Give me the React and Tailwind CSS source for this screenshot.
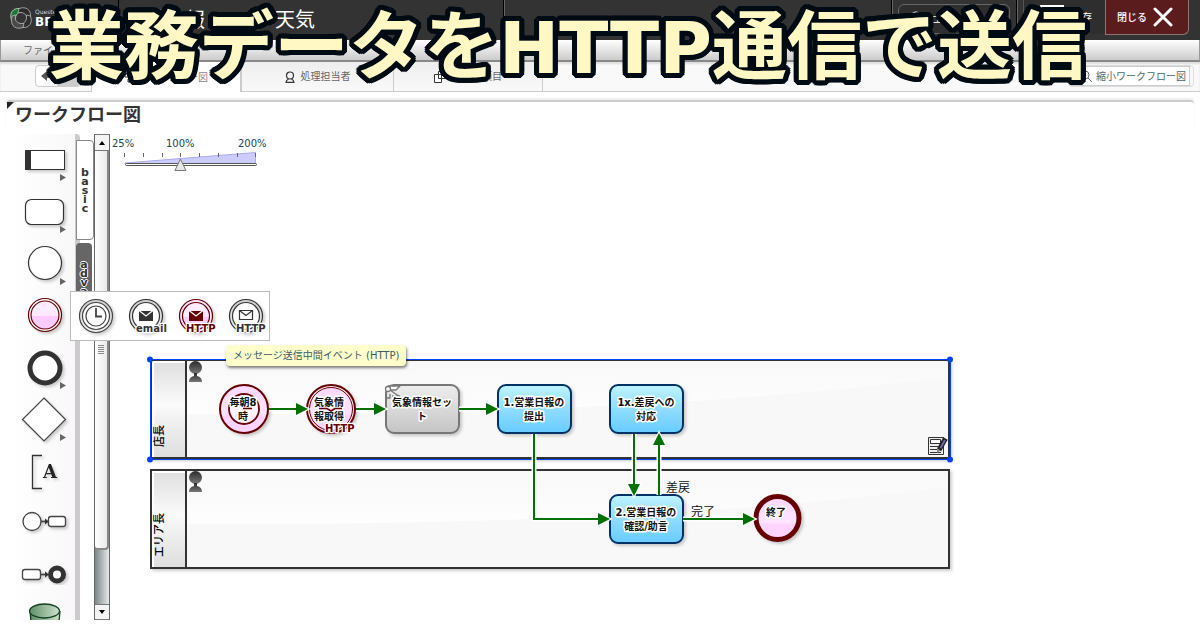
import { useState } from "react";

const RED = "#660000";
const GREEN = "#007000";

function Defs() {
  return (
    <svg width="0" height="0" className="absolute" aria-hidden="true">
      <defs>
        <linearGradient id="blue" x1="0" y1="0" x2="0" y2="1">
          <stop offset="0" stopColor="#c0f4ff" />
          <stop offset="0.5" stopColor="#90dcff" />
          <stop offset="1" stopColor="#66ccff" />
        </linearGradient>
        <linearGradient id="gray" x1="0" y1="0" x2="0" y2="1">
          <stop offset="0" stopColor="#eeeeee" />
          <stop offset="1" stopColor="#c4c4c4" />
        </linearGradient>
        <linearGradient id="pink" x1="0" y1="0" x2="0" y2="1">
          <stop offset="0" stopColor="#ffeeff" />
          <stop offset="0.52" stopColor="#ffe8ff" />
          <stop offset="0.53" stopColor="#ffccff" />
          <stop offset="1" stopColor="#ffccff" />
        </linearGradient>
        <linearGradient id="pinkSoft" x1="0" y1="0" x2="0" y2="1">
          <stop offset="0" stopColor="#ffd8ff" />
          <stop offset="0.6" stopColor="#ffe4ff" />
          <stop offset="0.66" stopColor="#ffd4fc" />
          <stop offset="1" stopColor="#ffd4ff" />
        </linearGradient>
        <linearGradient id="metal" x1="0" y1="0" x2="0" y2="1">
          <stop offset="0" stopColor="#cccccc" />
          <stop offset="1" stopColor="#f4f4f4" />
        </linearGradient>
        <linearGradient id="laneHead" x1="0" y1="0" x2="0" y2="1">
          <stop offset="0" stopColor="#e0e0e0" />
          <stop offset="0.45" stopColor="#fbfbfb" />
          <stop offset="0.55" stopColor="#f4f4f4" />
          <stop offset="1" stopColor="#dedede" />
        </linearGradient>
        <linearGradient id="laneShine" x1="0" y1="0" x2="0" y2="1">
          <stop offset="0" stopColor="#f8f8f8" />
          <stop offset="1" stopColor="#fefefe" />
        </linearGradient>
        <linearGradient id="person" x1="0" y1="0" x2="0" y2="1">
          <stop offset="0" stopColor="#2c2c2c" />
          <stop offset="1" stopColor="#777777" />
        </linearGradient>
        <linearGradient id="store" x1="0" y1="0" x2="1" y2="0">
          <stop offset="0" stopColor="#5f8f68" />
          <stop offset="1" stopColor="#cfe2cf" />
        </linearGradient>
        <filter id="shadow" x="-20%" y="-20%" width="150%" height="150%">
          <feDropShadow dx="2" dy="2" stdDeviation="1.5" floodColor="#000" floodOpacity="0.2" />
        </filter>
      </defs>
    </svg>
  );
}

function Logo() {
  return (
    <svg width="24" height="24" viewBox="0 0 24 24" aria-hidden="true">
      <g strokeWidth="0.8" strokeLinejoin="round" stroke="#b8b8b8">
        <path d="M2.500 14C0 7 4 2 10 2.500l4 .5 1 3.500C9 5.500 6 8 6.500 15z" fill="#1d7a3a" stroke="#c4dcc8" />
        <path d="M2.500 14C0 7 4 2 10 2.500l4 .5 1 3.500C9 5.500 6 8 6.500 15z" fill="#2c2c2c" transform="rotate(90 12 12)" />
        <path d="M2.500 14C0 7 4 2 10 2.500l4 .5 1 3.500C9 5.500 6 8 6.500 15z" fill="#2c2c2c" transform="rotate(180 12 12)" />
        <path d="M2.500 14C0 7 4 2 10 2.500l4 .5 1 3.500C9 5.500 6 8 6.500 15z" fill="#4a4a4a" transform="rotate(270 12 12)" />
      </g>
    </svg>
  );
}

function Header() {
  return (
    <header className="flex h-10 shrink-0 items-start bg-[#333333] text-white">
      <a href="#home" className="flex w-[118px] items-center gap-0.5 pt-1.5 pl-[9px]">
        <Logo />
        <span className="flex flex-col font-['DejaVu_Sans'] leading-none">
          <span className="text-[6px] leading-[8px] text-gray-300">Questetra</span>
          <span className="text-[12px] leading-[12px] font-bold">BPM</span>
        </span>
      </a>
      <div className="flex h-9 flex-1 items-center gap-[70px] border-l border-black pt-1 pl-[6px] text-[20px] leading-none">
        <span className="w-20">営業日報</span>
        <span>天気</span>
      </div>
      <div className="h-9 w-[388px] border-l border-black shadow-[inset_1px_0_0_#666]" />
      <div className="flex h-9 items-start border-l border-black pt-1 pr-[6px] pl-[6px] shadow-[inset_1px_0_0_#666]">
        <button className="flex h-[30px] w-28 items-center gap-2 rounded-md border border-[#666] bg-[#2e2e2e] pl-[10px] text-[10px]">
          <svg width="14" height="16" viewBox="0 0 14 16" aria-hidden="true">
            <circle cx="7" cy="7" r="6.500" fill="#fff" />
          </svg>
          ユーザ
        </button>
      </div>
      <div className="flex h-9 border-l border-black pl-[6px] shadow-[inset_1px_0_0_#666]">
        <button className="flex h-[34px] w-[82px] items-center gap-2 border-l border-[#555] bg-[#2e2e2e] pl-4 text-[10px]">
          <svg width="24" height="24" viewBox="0 0 24 24" fill="none" stroke="#fff" strokeWidth="2" aria-hidden="true">
            <path d="M1 1h22v22H1zM5 2v7h14V2" />
          </svg>
          保存
        </button>
        <button className="flex h-[35px] w-[84px] items-center gap-1.5 rounded-br-md border border-t-0 border-[#8c7474] bg-[#5a1c1c] pl-[11px] text-[10px] font-medium">
          閉じる
          <svg width="20" height="20" viewBox="0 0 20 20" stroke="#fff" strokeWidth="3" strokeLinecap="round" aria-hidden="true">
            <path d="M2 2l16 16M18 2L2 18" />
          </svg>
        </button>
      </div>
      <div className="w-[11px]" />
    </header>
  );
}

function Tabs() {
  return (
    <div className="flex h-[30px] shrink-0 items-end bg-[#f9f9f9] text-[10px] text-[#666] shadow-[inset_0_2px_2px_#ddd]">
      <div className="flex h-[30px] w-[92px] items-start border-r border-b border-[#ccc] pt-[3px] pl-[35px]">
        <div className="flex h-[22px] w-[46px] overflow-hidden rounded border border-[#ccc] bg-white">
          <button aria-label="元に戻す" className="flex w-[22px] items-center justify-center">
            <svg width="12" height="12" viewBox="0 0 12 12" fill="#555" aria-hidden="true"><path d="M0 6l6-5v3h6v4H6v3z" /></svg>
          </button>
          <button aria-label="やり直す" className="flex w-6 items-center justify-center bg-[#ccc]">
            <svg width="12" height="12" viewBox="0 0 12 12" fill="#aaa" aria-hidden="true"><path d="M12 6L6 1v3H0v4h6v3z" /></svg>
          </button>
        </div>
      </div>
      <nav className="flex h-[30px]">
        <button className="flex w-[148px] items-center justify-center gap-1 bg-white text-[#888]">
          <svg width="10" height="12" viewBox="0 0 10 12" fill="none" stroke="#333" aria-hidden="true"><path d="M1 2h5v4H1zM4 8h5v3H4z" /></svg>
          ワークフロー図
        </button>
        <button className="flex w-[153px] items-center justify-center gap-1.5 rounded-tl-md border-b border-l-2 border-[#ccc] bg-linear-to-b from-[#eeeeee] to-[#f9f9f9]">
          <svg width="10" height="12" viewBox="0 0 10 12" fill="none" stroke="#333" strokeWidth="1.200" aria-hidden="true">
            <circle cx="5" cy="4.500" r="3.500" /><path d="M3.500 8C1.500 9 1 10 1 11.400h8C9 10 8.500 9 6.500 8" />
          </svg>
          処理担当者
        </button>
        <button className="flex w-[150px] items-center gap-1.5 border-x border-b border-[#ccc] bg-linear-to-b from-[#eeeeee] to-[#f9f9f9] pl-10">
          <svg width="12" height="12" viewBox="0 0 12 12" fill="#fff" stroke="#333" aria-hidden="true"><path d="M4.500.5h7v7h-7zM.5 3.500h7v8h-7z" /></svg>
          データ項目
        </button>
      </nav>
      <div className="flex h-[30px] flex-1 items-start justify-end rounded-tr-sm border-b border-[#ccc] pt-[3px] pr-[6px]">
        <div className="flex rounded border border-[#ddd] pr-[3px] pl-[2px]">
          <button className="flex h-[20px] items-center gap-1 border border-[#ccc] bg-white pr-[3px] pl-2 text-[10px] text-[#4a6a70]">
            <svg width="12" height="12" viewBox="0 0 12 12" fill="none" stroke="#666" aria-hidden="true"><circle cx="5" cy="5" r="4" /><path d="M8 8l4 4" /></svg>
            縮小ワークフロー図
          </button>
        </div>
      </div>
    </div>
  );
}

function More() {
  return <path d="M50 40v7l6-3.500z" fill="#666" />;
}

const TOOLS = [
  ["レーン", <><g filter="url(#shadow)"><rect x="15.500" y="16.500" width="39" height="19" fill="#fff" stroke="#333" /><path d="M15 16h6v20h-6z" fill="#333" /></g><More /></>],
  ["タスク", <><rect x="15.500" y="13.500" width="38" height="25" rx="6" fill="#fff" stroke="#333" strokeWidth="1.200" filter="url(#shadow)" /><More /></>],
  ["開始イベント", <><circle cx="35" cy="25" r="16.500" fill="#fff" stroke="#333" strokeWidth="1.200" filter="url(#shadow)" /><More /></>],
  ["中間イベント", <g filter="url(#shadow)"><circle cx="35" cy="25" r="16.500" fill="#fff" stroke={RED} strokeWidth="1.200" /><circle cx="35" cy="25" r="14" fill="url(#pink)" stroke={RED} strokeWidth="1.200" /></g>],
  ["終了イベント", <><circle cx="35" cy="26" r="15" fill="#fff" stroke="#333" strokeWidth="5" filter="url(#shadow)" /><More /></>],
  ["ゲートウェイ", <><path d="M34 4l21.500 21.500L34 47 12.500 25.500z" fill="#fff" stroke="#444" strokeWidth="1.200" filter="url(#shadow)" /><More /></>],
  ["注釈", <g filter="url(#shadow)"><path d="M32 9.500h-9.500v33H32" fill="none" stroke="#333" strokeWidth="1.300" /><text x="33" y="32" className="font-['DejaVu_Serif'] text-[18px] font-bold" fill="#222">A</text></g>],
  ["開始接続", <g fill="#fff" stroke="#444" strokeWidth="1.300" filter="url(#shadow)"><circle cx="22" cy="23.500" r="9" /><path d="M31 23.500h6" strokeWidth="1.800" /><path d="M35 20.500l4 3-4 3z" fill="#333" stroke="none" /><rect x="38.500" y="18.500" width="17" height="10" rx="2.500" /></g>],
  ["終了接続", <g fill="#fff" stroke="#444" strokeWidth="1.300" filter="url(#shadow)"><rect x="12.500" y="19.500" width="18" height="10" rx="2.500" /><path d="M31 24.500h6" strokeWidth="1.800" /><path d="M35 21.500l4 3-4 3z" fill="#333" stroke="none" /><circle cx="47" cy="24.500" r="6.500" strokeWidth="5" stroke="#333" /></g>],
  ["データストア", <g stroke="#144020" strokeWidth="1.300"><path d="M20 9l3 32h24l3-32" fill="url(#store)" /><ellipse cx="34.500" cy="9" rx="15" ry="7" fill="url(#store)" /></g>],
];

function Palette() {
  return (
    <div className="flex w-[70px] shrink-0 flex-col overflow-hidden rounded-tr border-r-[5px] border-[#cccacc] bg-linear-to-r from-white via-[#fcfcfc] to-[#f8f8f8]">
      {TOOLS.map(([name, art]) => (
        <button key={name} aria-label={name} className="h-[52px] shrink-0">
          <svg width="65" height="52" viewBox="0 0 65 52" className="overflow-visible">
            {art}
          </svg>
        </button>
      ))}
    </div>
  );
}

function VerticalWord({ word }) {
  return (
    <span className="flex flex-col items-center font-['DejaVu_Sans'] text-[11px] leading-[9px] font-bold text-[#333] [text-shadow:1px_0_#fff,-1px_0_#fff,0_1px_#fff,0_-1px_#fff]">
      {word.split("").map((c, i) => (
        <span key={i}>{c}</span>
      ))}
    </span>
  );
}

function PaletteTabs() {
  return (
    <div className="-ml-1 flex w-[18px] shrink-0 flex-col gap-[3px] pt-[6px]">
      <button className="flex h-[100px] items-center justify-center rounded-r border border-[#888] bg-white">
        <VerticalWord word="basic" />
      </button>
      <button className="mr-0.5 flex h-[96px] items-start justify-center rounded-t bg-[#666] pt-[17px]">
        <VerticalWord word="advance" />
      </button>
    </div>
  );
}

function ScrollBar() {
  return (
    <div className="flex w-4 shrink-0 flex-col border-x border-[#666] bg-linear-to-r from-[#7d8688] to-[#e8eaea]">
      <button aria-label="上へ" className="flex h-[17px] shrink-0 items-center justify-center border-y border-[#777] bg-[#f4f4f4]">
        <svg width="6" height="4" viewBox="0 0 6 4"><path d="M0 4l3-4 3 4z" /></svg>
      </button>
      <div className="flex min-h-0 flex-1 flex-col">
        <div className="flex h-[88%] items-center justify-center rounded-b-sm border-r-2 border-b-2 border-[#888] bg-linear-to-r from-white to-[#eaeaea]">
          <svg width="6" height="9" viewBox="0 0 6 9" stroke="#888"><path d="M0 .5h6M0 2.500h6M0 4.500h6M0 6.500h6M0 8.500h6" /></svg>
        </div>
      </div>
      <button aria-label="下へ" className="flex h-4 shrink-0 items-center justify-center border-y border-[#777] bg-[#f4f4f4]">
        <svg width="6" height="4" viewBox="0 0 6 4"><path d="M0 0l3 4 3-4z" /></svg>
      </button>
    </div>
  );
}

function ZoomSlider() {
  const [value, setValue] = useState(42);
  const x = 15 + value * 1.32;
  return (
    <div className="relative h-[40px] w-[160px]">
      <svg width="160" height="40" viewBox="0 0 160 40" aria-hidden="true">
        <g className="font-['DejaVu_Sans'] text-[10px]" fill="#24474d">
          <text x="2" y="13">25%</text>
          <text x="56" y="13">100%</text>
          <text x="128" y="13">200%</text>
        </g>
        <path d="M15 29L145.500 18.500V30H15z" fill="#ccccff" stroke="#aaaaee" />
        <path d="M14.500 19v4M33.500 19v4M52.500 19v4M70.500 19v4M89.500 19v4M108.500 19v4M127.500 19v4M145.500 19v4" stroke="#666" />
        <rect x="15.500" y="29.500" width="131" height="2" rx="1" fill="#fff" stroke="#555" />
        <path d={`M${x} 25l5.500 11.500h-11z`} fill="#e6e6e6" stroke="#777" strokeLinejoin="round" />
      </svg>
      <label htmlFor="zoom" className="sr-only">拡大率</label>
      <input id="zoom" type="range" min="0" max="100" value={value} onChange={(e) => setValue(Number(e.target.value))} className="absolute top-5 left-[15px] h-5 w-[132px] cursor-pointer opacity-0" />
    </div>
  );
}

function Edge({ d, tip }) {
  return (
    <g>
      <path d={d} fill="none" stroke="#fff" strokeWidth="5" />
      <path d={tip} fill={GREEN} stroke="#fff" strokeWidth="2.500" />
      <path d={d} fill="none" stroke={GREEN} strokeWidth="2" />
      <path d={tip} fill={GREEN} />
    </g>
  );
}

function Label({ x, y, lines }) {
  return (
    <text textAnchor="middle" fill="#111" stroke="#fff" strokeWidth="3" strokeLinejoin="round" className="text-[10px] font-bold [paint-order:stroke]">
      {lines.map((line, i) => (
        <tspan key={line} x={x} y={y + i * 14}>{line}</tspan>
      ))}
    </text>
  );
}

function Task({ x, y, lines, gray }) {
  return (
    <g>
      <rect x={x} y={y} width="73" height="48" rx="8" fill={gray ? "url(#gray)" : "url(#blue)"} stroke={gray ? "#777" : "#003366"} strokeWidth="2" filter="url(#shadow)" />
      {gray && (
        <g fill="#fff" stroke="#777" strokeWidth="1.300" strokeLinejoin="round">
          <path d="M388 386h12l-4 4h-6z" />
          <path d="M390 390l10 7M386 392v6h4v-4M392 396h8" fill="none" />
          <circle cx="388" cy="389" r="2.500" />
        </g>
      )}
      <Label x={x + 36} y={y + 21} lines={lines} />
    </g>
  );
}

function Lane({ y, name, nameY, selected }) {
  return (
    <g>
      <rect x="151" y={y + 1} width="798" height="98" fill="#f8f8f8" stroke="#333" strokeWidth="2" filter="url(#shadow)" />
      <path d={`M187 ${y + 2}H948V${y + 18}Q650 ${y + 57} 187 ${y + 55}z`} fill="url(#laneShine)" />
      <rect x="152" y={y + 2} width="34" height="96" fill="#fff" />
      <rect x="154" y={y + 4} width="31" height="94" fill="url(#laneHead)" />
      <path d={`M186 ${y + 1}v98`} stroke="#333" strokeWidth="2" />
      <g fill="url(#person)">
        <circle cx="195.500" cy={y + 8.5} r="6.500" />
        <path d={`M194 ${y + 14}h3v3q5 1 5 6h-13q0-5 5-6z`} />
      </g>
      <text transform={`translate(163 ${nameY}) rotate(-90)`} className="text-[11px] font-medium" fill="#000">{name}</text>
      {selected && (
        <g fill="#0044ff">
          <rect x="150.500" y={y + 0.5} width="800" height="100" fill="none" stroke="#0044ff" />
          <circle cx="150" cy={y + 0.5} r="3" /><circle cx="950" cy={y + 0.5} r="3" />
          <circle cx="150" cy={y + 100.5} r="3" /><circle cx="950" cy={y + 100.5} r="3" />
        </g>
      )}
    </g>
  );
}

function HttpTag({ x, y, color, children }) {
  return (
    <text x={x} y={y} fill={color} stroke="#fff" strokeWidth="2.500" strokeLinejoin="round" className="font-['DejaVu_Sans'] text-[10px] font-bold [paint-order:stroke]">{children}</text>
  );
}

function Diagram() {
  return (
    <svg width="860" height="440" viewBox="110 174 860 440" className="block">
      <Lane y={359} name="店長" nameY={447} selected />
      <Lane y={469} name="エリア長" nameY={557} />
      <g filter="url(#shadow)">
        <circle cx="244" cy="409" r="24" fill="url(#pinkSoft)" stroke={RED} strokeWidth="2" />
      </g>
      <circle cx="244" cy="409" r="15" fill="#fff" fillOpacity="0.500" stroke={RED} strokeWidth="1.800" />
      <Label x={243} y={406} lines={["毎朝8", "時"]} />
      <path d="M243 408.500h9" stroke={RED} strokeWidth="1.500" />
      <circle cx="331" cy="409" r="24" fill="#ffeeff" stroke={RED} strokeWidth="2" filter="url(#shadow)" />
      <circle cx="331" cy="409" r="21.500" fill="url(#pinkSoft)" stroke={RED} strokeWidth="1" />
      <Label x={329} y={406} lines={["気象情", "報取得"]} />
      <path d="M319 408.500h8l4 2.500 4-2.500h7" fill="none" stroke={RED} strokeWidth="1.500" />
      <HttpTag x={325} y={432} color={RED}>HTTP</HttpTag>
      <Task x={386} y={385} gray lines={["気象情報セッ", "ト"]} />
      <Task x={498} y={385} lines={["1.営業日報の", "提出"]} />
      <Task x={610} y={385} lines={["1x.差戻への", "対応"]} />
      <Task x={610} y={495} lines={["2.営業日報の", "確認/助言"]} />
      <circle cx="777.500" cy="518" r="21.500" fill="url(#pinkSoft)" stroke={RED} strokeWidth="5" filter="url(#shadow)" />
      <Label x={776} y={516} lines={["終了"]} />
      <Edge d="M269 409h30" tip="M296 403l12 6-12 6z" />
      <Edge d="M356 409h20" tip="M374 403l12 6-12 6z" />
      <Edge d="M459 409h30" tip="M486 403l12 6-12 6z" />
      <Edge d="M534 434v85h66" tip="M598 513l12 6-12 6z" />
      <Edge d="M634 434v54" tip="M628 484l6 12 6-12z" />
      <Edge d="M659 495v-54" tip="M653 445l6-12 6 12z" />
      <Edge d="M683 519h63" tip="M743 513l12 6-12 6z" />
      <g className="text-[12px]" fill="#111">
        <text x="666" y="492">差戻</text>
        <text x="691" y="516">完了</text>
      </g>
      <g>
        <path d="M928.500 437.500h15v17h-15z" fill="#eee" stroke="#333" />
        <path d="M930.500 439.500h10v4h-10z" fill="#fff" stroke="#333" />
        <path d="M930 446.500h8M930 449.500h7M930 452.500h11" stroke="#333" />
        <path d="M945.500 438.500l-6.500 11.500" stroke="#222" strokeWidth="5" />
        <path d="M945 440l-4.500 8" stroke="#6666aa" strokeWidth="2" />
        <path d="M937 448l3.500 2.500-3.500 2.500z" fill="#888" />
      </g>
    </svg>
  );
}

const EVENTS = [
  { kind: "clock", name: "タイマー中間イベント", color: "#444" },
  { kind: "mail", name: "メール送信中間イベント", color: "#333", tag: "email" },
  { kind: "mail", name: "メッセージ送信中間イベント", color: RED, tag: "HTTP" },
  { kind: "open", name: "メッセージ受信中間イベント", color: "#333", tag: "HTTP" },
];

function EventMenu() {
  return (
    <div className="absolute top-[157px] left-[70px] flex h-[50px] border border-[#bbb] bg-white">
      {EVENTS.map(({ kind, name, color, tag }) => (
        <button key={name} aria-label={name} className="h-12 w-[50px] last:w-[48px]">
          <svg width="50" height="48" viewBox="0 0 50 48" className="overflow-visible">
            <g stroke={color} strokeWidth="1.200">
              <circle cx="25" cy="24" r="16.500" fill={color === RED ? "#ffe4ff" : "url(#metal)"} filter="url(#shadow)" />
              <circle cx="25" cy="24" r="13.500" fill={color === RED ? "url(#pink)" : "#fff"} />
              {kind === "clock" && <><circle cx="25" cy="24" r="10" fill="none" /><path d="M25 16v8.500h6" fill="none" strokeWidth="1.800" /></>}
              {kind === "mail" && <><path d="M18 19h14v10H18z" fill={color} stroke="none" /><path d="M18 18.500l7 5.500 7-5.500" fill="none" stroke="#fff" /></>}
              {kind === "open" && <><path d="M18.500 18.500h13v9h-13z" fill="#fff" /><path d="M18.500 18.500l6.500 5 6.500-5" fill="none" /></>}
            </g>
            {tag && <HttpTag x={15} y={40} color={color}>{tag}</HttpTag>}
          </svg>
        </button>
      ))}
    </div>
  );
}

function Editor() {
  return (
    <div className="relative flex min-h-0 flex-1">
      <div className="w-[10px] shrink-0" />
      <Palette />
      <PaletteTabs />
      <ScrollBar />
      <div className="min-w-0 flex-1 overflow-hidden">
        <ZoomSlider />
        <Diagram />
      </div>
      <EventMenu />
      <div role="tooltip" className="absolute top-[211px] left-[226px] rounded bg-[#ffffcc] px-[7px] text-[10px] leading-[21px] text-[#3d5c62] shadow-[1px_2px_3px_rgba(0,0,0,0.5)]">
        メッセージ送信中間イベント (HTTP)
      </div>
    </div>
  );
}

export default function App() {
  return (
    <div className="relative flex h-screen flex-col overflow-hidden bg-white font-['DejaVu_Sans','Noto_Sans_CJK_JP',sans-serif]">
      <Defs />
      <Header />
      <div className="flex h-[22px] shrink-0 items-center border-x border-b-2 border-x-[#999] border-b-[#888] bg-linear-to-b from-white to-[#cccccc] pl-[22px] text-[10px] text-[#666]">
        <button>ファイル</button>
      </div>
      <Tabs />
      <main className="flex min-h-0 flex-1 flex-col pt-2 pb-[10px]">
        <div className="mx-[6px] flex h-[34px] shrink-0 items-start rounded-t border-t-2 border-[#ccc] shadow-[0_-2px_2px_#eee]">
          <svg width="8" height="8" viewBox="0 0 8 8" className="ml-px" aria-hidden="true"><path d="M0 0h7L0 7z" fill="#222" /></svg>
          <h2 className="text-[18px] leading-[26px] font-bold text-[#333]">ワークフロー図</h2>
        </div>
        <Editor />
      </main>
      <h1 className="pointer-events-none absolute top-[2px] left-[49px] flex items-baseline text-[75px] leading-[90px] font-bold whitespace-nowrap text-[#fff8c4] [text-shadow:5px_0_#000b14,-5px_0_#000b14,0_5px_#000b14,0_-5px_#000b14,4px_3px_#000b14,-4px_3px_#000b14,4px_-3px_#000b14,-4px_-3px_#000b14,3px_4px_#000b14,-3px_4px_#000b14,3px_-4px_#000b14,-3px_-4px_#000b14,5px_2px_#000b14,-5px_2px_#000b14,5px_-2px_#000b14,-5px_-2px_#000b14,2px_5px_#000b14,-2px_5px_#000b14,2px_-5px_#000b14,-2px_-5px_#000b14]">
        業務データを<span className="text-[72px]">HTTP</span>通信で送信
      </h1>
    </div>
  );
}
